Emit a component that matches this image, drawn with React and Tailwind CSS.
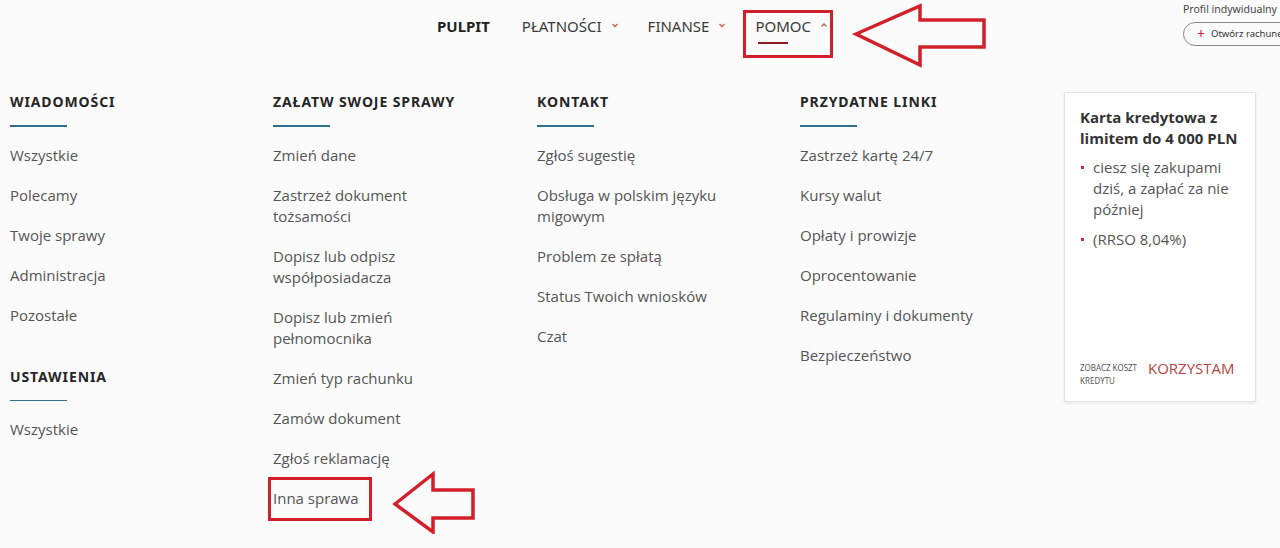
import React from "react";

const OS = { fontFamily: '"Open Sans", "Liberation Sans", sans-serif' };
const HF = { fontFamily: '"Noto Sans", "Liberation Sans", sans-serif' };

function Chevron({ up }) {
  return (
    <svg width="8" height="6" viewBox="0 0 8 6" className="ml-[9px] mt-[-2px]">
      <polyline
        points={up ? "1.5,4.5 4,2 6.5,4.5" : "1.5,2 4,4.5 6.5,2"}
        fill="none"
        stroke="#c25b58"
        strokeWidth="1.3"
      />
    </svg>
  );
}

function Arrow({ className, w, h, points }) {
  return (
    <svg className={className} width={w} height={h} viewBox={`0 0 ${w} ${h}`}>
      <polygon points={points} fill="none" stroke="#d1202a" strokeWidth="3.5" strokeLinejoin="miter" />
    </svg>
  );
}

function Heading({ children, className = "" }) {
  return (
    <div className={className}>
      <div className="text-[14px] leading-[20px] font-bold text-[#262626] tracking-[0.9px] whitespace-nowrap" style={HF}>
        {children}
      </div>
      <div className="mt-[13px] h-[1.5px] w-[57px] bg-[#2f6f8c]" />
    </div>
  );
}

function Items({ items }) {
  return (
    <div className="mt-[18px] flex flex-col gap-[19px]">
      {items.map((it, i) => (
        <div key={i} className="text-[15px] leading-[21px] text-[#555]" style={OS}>
          {it}
        </div>
      ))}
    </div>
  );
}

export default function App() {
  return (
    <div className="w-[1280px] h-[548px] overflow-hidden bg-[#fbfbfb] relative">
      {/* header */}
      <div className="flex h-[60px]">
        <div className="flex items-start pl-[437px] pt-[16px] text-[15px] leading-[20px] text-[#3a3a3a]" style={HF}>
          <span className="font-bold text-[#222]">PULPIT</span>
          <span className="ml-[32px] flex items-center">PŁATNOŚCI<Chevron /></span>
          <span className="ml-[29px] flex items-center">FINANSE<Chevron /></span>
          <div className="relative ml-[17px] mt-[-6px] w-[90px] h-[48px] border-[3px] border-[#d1202a] pl-[9px] pt-[3px]">
            <div className="flex items-center">
              POMOC<Chevron up />
            </div>
            <div className="mt-[6px] ml-[3px] h-[2px] w-[30px] bg-[#8c1d1d]" />
            <Arrow
              className="absolute left-[104px] top-[-10px]"
              w={136}
              h={66}
              points="6,31 70,3 70,17 134,17 134,44 70,44 70,62"
            />
          </div>
        </div>
        <div className="ml-auto w-[97px] pt-[2px]" style={HF}>
          <div className="text-[10.5px] leading-[14px] text-[#444] whitespace-nowrap">Profil indywidualny ›</div>
          <div className="mt-[6px] h-[24px] w-[120px] rounded-full border border-[#8a8a8a] flex items-center pl-[13px] whitespace-nowrap">
            <span className="text-[#c0303a] text-[14px] leading-none mr-[6px]">+</span>
            <span className="text-[9.5px] text-[#333]">Otwórz rachunek</span>
          </div>
        </div>
      </div>

      {/* menu */}
      <div className="flex pl-[10px] pt-[32px]">
        <div className="w-[263px]">
          <Heading>WIADOMOŚCI</Heading>
          <Items items={["Wszystkie", "Polecamy", "Twoje sprawy", "Administracja", "Pozostałe"]} />
          <Heading className="mt-[41px]">USTAWIENIA</Heading>
          <Items items={["Wszystkie"]} />
        </div>
        <div className="w-[264px]">
          <Heading>ZAŁATW SWOJE SPRAWY</Heading>
          <div className="mt-[18px] flex flex-col gap-[19px] text-[15px] leading-[21px] text-[#555]" style={OS}>
            <div>Zmień dane</div>
            <div>Zastrzeż dokument<br />tożsamości</div>
            <div>Dopisz lub odpisz<br />współposiadacza</div>
            <div>Dopisz lub zmień<br />pełnomocnika</div>
            <div>Zmień typ rachunku</div>
            <div>Zamów dokument</div>
            <div>Zgłoś reklamację</div>
            <div className="relative">
              <div className="absolute left-[-5px] top-[-11px] w-[104px] h-[44px] border-[3px] border-[#d1202a]" />
              <span className="relative">Inna sprawa</span>
              <Arrow
                className="absolute left-[118px] top-[-18px]"
                w={86}
                h={64}
                points="4,34 42,4 42,20 82,20 82,48 42,48 42,62"
              />
            </div>
          </div>
        </div>
        <div className="w-[263px]">
          <Heading>KONTAKT</Heading>
          <div className="mt-[18px] flex flex-col gap-[19px] text-[15px] leading-[21px] text-[#555]" style={OS}>
            <div>Zgłoś sugestię</div>
            <div>Obsługa w polskim języku<br />migowym</div>
            <div>Problem ze spłatą</div>
            <div>Status Twoich wniosków</div>
            <div>Czat</div>
          </div>
        </div>
        <div className="w-[264px]">
          <Heading>PRZYDATNE LINKI</Heading>
          <Items
            items={[
              "Zastrzeż kartę 24/7",
              "Kursy walut",
              "Opłaty i prowizje",
              "Oprocentowanie",
              "Regulaminy i dokumenty",
              "Bezpieczeństwo",
            ]}
          />
        </div>
        <div className="w-[192px] h-[310px] bg-white border border-[#e4e4e4] shadow-[0_1px_3px_rgba(0,0,0,0.08)] flex flex-col pl-[15px] pr-[10px] pt-[14px] pb-[14px]">
          <div className="text-[15px] leading-[21px] font-bold text-[#333]" style={OS}>
            Karta kredytowa z<br />limitem do 4 000 PLN
          </div>
          <div className="mt-[8px] flex flex-col gap-[9px] text-[15px] leading-[21px] text-[#555]" style={OS}>
            <div className="flex">
              <span className="mt-[9px] w-[3px] h-[3px] bg-[#c0303a] shrink-0 mr-[9px] ml-[1px]" />
              <span>ciesz się zakupami<br />dziś, a zapłać za nie<br />później</span>
            </div>
            <div className="flex">
              <span className="mt-[9px] w-[3px] h-[3px] bg-[#c0303a] shrink-0 mr-[9px] ml-[1px]" />
              <span>(RRSO 8,04%)</span>
            </div>
          </div>
          <div className="mt-auto flex items-start">
            <div className="text-[8px] leading-[13px] text-[#555] w-[68px]" style={HF}>
              ZOBACZ KOSZT<br />KREDYTU
            </div>
            <div className="text-[15px] leading-[20px] text-[#b5473f] mt-[-3px]" style={OS}>
              KORZYSTAM
            </div>
          </div>
        </div>
      </div>
    </div>
  );
}
